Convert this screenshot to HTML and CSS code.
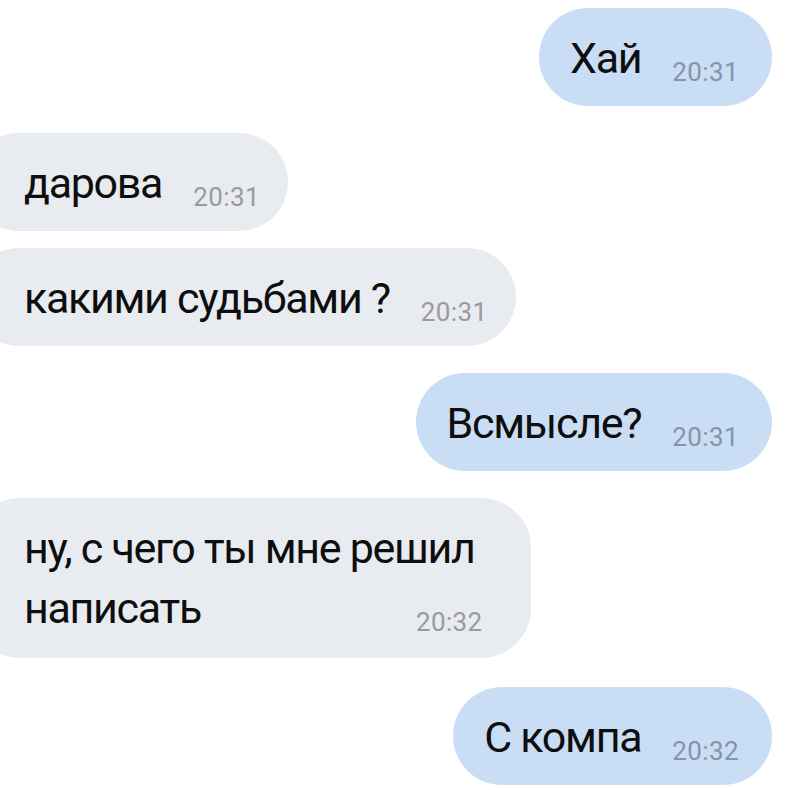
FILE: index.html
```html
<!DOCTYPE html>
<html lang="ru">
<head>
<meta charset="utf-8">
<title>Чат</title>
<link rel="stylesheet" href="styles.css">
</head>
<body>
<main class="chat">
  <div class="row row-out first">
    <div class="bubble out"><span class="text">Хай</span><span class="time">20:31</span></div>
  </div>
  <div class="row row-in gap-big">
    <div class="bubble in"><span class="text">дарова</span><span class="time">20:31</span></div>
  </div>
  <div class="row row-in gap-small">
    <div class="bubble in"><span class="text">какими судьбами ?</span><span class="time">20:31</span></div>
  </div>
  <div class="row row-out gap-big">
    <div class="bubble out"><span class="text">Всмысле?</span><span class="time">20:31</span></div>
  </div>
  <div class="row row-in gap-big">
    <div class="bubble in multi"><span class="text">ну, с чего ты мне решил<br>написать</span><span class="time time-float">20:32</span></div>
  </div>
  <div class="row row-out gap-last">
    <div class="bubble out"><span class="text">С компа</span><span class="time">20:32</span></div>
  </div>
</main>
</body>
</html>
```

FILE: styles.css
```css
html, body {
  margin: 0;
  padding: 0;
  background: #ffffff;
}

body {
  width: 788px;
  height: 790px;
  overflow: hidden;
  font-family: Roboto, "Noto Sans", "Liberation Sans", sans-serif;
  color: #0e0e0e;
}

.chat {
  display: flex;
  flex-direction: column;
  padding-top: 8px;
}

.row {
  display: flex;
}

.row-out {
  justify-content: flex-end;
  padding-right: 16px;
}

.row-in {
  justify-content: flex-start;
  margin-left: -30px;
}

.first {
  margin-top: 0;
}

.gap-big {
  margin-top: 27px;
}

.gap-small {
  margin-top: 17px;
}

.gap-last {
  margin-top: 29px;
}

.bubble {
  font-size: 43px;
  letter-spacing: -1.3px;
  line-height: 60px;
  padding: 20px 33px 18px 31px;
  border-radius: 50px;
  white-space: nowrap;
}

.row-in .bubble {
  padding-left: 54px;
  padding-right: 28px;
}

.out {
  background: #c9ddf5;
}

.in {
  background: #e8ebef;
}

.time {
  display: inline-block;
  font-size: 26px;
  letter-spacing: 0.4px;
  line-height: 1;
  margin-left: 31px;
  vertical-align: -8px;
}

.out .time {
  color: #8494a9;
}

.in .time {
  color: #9a9a9c;
}

.row-in .multi {
  padding-top: 20px;
  padding-bottom: 20px;
  padding-right: 56px;
}

.time-float {
  float: right;
  line-height: 60px;
  position: relative;
  top: 14px;
  margin-right: -8px;
}
```
